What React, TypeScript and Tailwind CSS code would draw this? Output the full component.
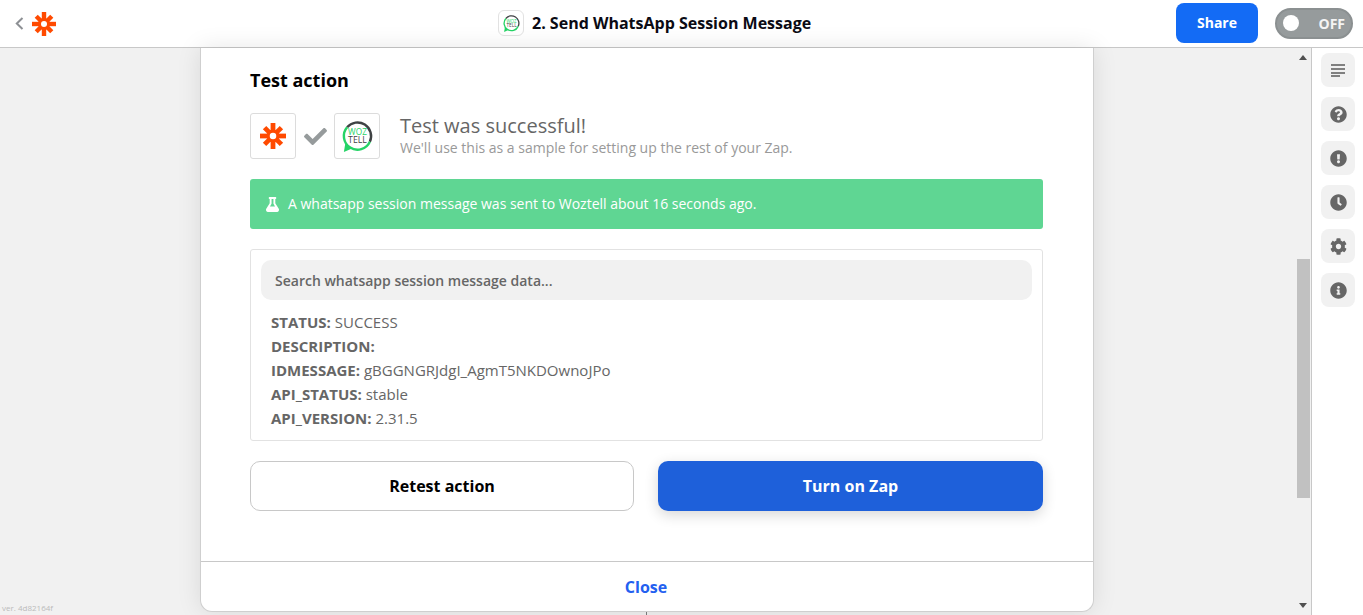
import { FaCheck, FaClock, FaCog, FaExclamationCircle, FaFlask, FaInfoCircle, FaQuestionCircle } from "react-icons/fa";

const ZapierMark = ({ size }: { size: number }) => (
  <svg width={size} height={size} viewBox="0 0 24 24">
    <g fill="#ff4a00">
      <rect x="9.8" y="0" width="4.4" height="24" />
      <rect x="0" y="9.8" width="24" height="4.4" />
      <rect x="9.8" y="1" width="4.4" height="22" transform="rotate(45 12 12)" />
      <rect x="9.8" y="1" width="4.4" height="22" transform="rotate(-45 12 12)" />
      <circle cx="12" cy="12" r="6" />
    </g>
    <circle cx="12" cy="12" r="3" fill="#fff" />
  </svg>
);

const WoztellMark = ({ size }: { size: number }) => (
  <svg width={size} height={size} viewBox="0 0 36 36">
    <path d="M7.3 8.5 A14 14 0 0 1 30.7 23.4" fill="none" stroke="#3f4244" strokeWidth="2.5" />
    <path d="M30.7 23.4 A14 14 0 1 1 7.3 8.5" fill="none" stroke="#25d366" strokeWidth="2.5" />
    <path d="M5.5 25 L4 34 L13 30 Z" fill="#25d366" />
    <text x="18" y="16.5" textAnchor="middle" fontSize="8.5" fill="#25d366" fontFamily="'Open Sans', sans-serif">
      WOZ
    </text>
    <text x="18" y="25" textAnchor="middle" fontSize="9" fill="#3f4244" fontFamily="'Open Sans', sans-serif">
      TELL
    </text>
  </svg>
);

const rows = [
  ["STATUS:", "SUCCESS"],
  ["DESCRIPTION:", ""],
  ["IDMESSAGE:", "gBGGNGRJdgI_AgmT5NKDOwnoJPo"],
  ["API_STATUS:", "stable"],
  ["API_VERSION:", "2.31.5"],
];

const sideButtons = [
  <svg key="lines" width="15" height="13" viewBox="0 0 15 13" fill="#808080">
    <rect y="0" width="14" height="2" />
    <rect y="4" width="14" height="2" />
    <rect y="8" width="14" height="2" />
    <rect y="11" width="9" height="2" />
  </svg>,
  <FaQuestionCircle key="help" size={17} />,
  <FaExclamationCircle key="alert" size={17} />,
  <FaClock key="clock" size={17} />,
  <FaCog key="cog" size={17} />,
  <FaInfoCircle key="info" size={17} />,
];

export default function App() {
  return (
    <div className="h-[615px] w-[1363px] overflow-hidden flex flex-col bg-white font-['Open_Sans',sans-serif]">
      {/* Top bar */}
      <header className="h-12 shrink-0 flex items-center justify-between border-b border-[#c8c8c8] bg-white pl-[15px] pr-[10px] relative">
        <div className="flex items-center gap-[8px]">
          <svg width="9" height="13" viewBox="0 0 9 13" fill="none" stroke="#8d9094" strokeWidth="2">
            <path d="M7.5 1 L1.8 6.5 L7.5 12" />
          </svg>
          <ZapierMark size={24} />
        </div>

        <div className="absolute left-[498px] top-[10px] flex items-center gap-[8px]">
          <div className="w-[26px] h-[26px] rounded-md border border-[#e2e2e2] flex items-center justify-center">
            <WoztellMark size={19} />
          </div>
          <span className="text-[16px] leading-6 font-bold text-[#0b0b14]">2. Send WhatsApp Session Message</span>
        </div>

        <div className="flex items-center gap-[17px] mb-px">
          <button className="w-[82px] h-10 rounded-lg bg-[#136bf5] text-white text-[14px] font-bold pb-px">Share</button>
          <div className="w-[78px] h-[31px] rounded-full bg-[#969b9c] border-2 border-[#8b9091] flex items-center justify-between pl-[6px] pr-[6px]">
            <span className="w-4 h-4 rounded-full bg-white" />
            <span className="text-[14px] font-bold text-[#f4f4f4]">OFF</span>
          </div>
        </div>
      </header>

      <div className="flex-1 min-h-0 flex">
        {/* Canvas with the editor panel */}
        <div className="relative flex-1 min-w-0 flex justify-center bg-[#f1f1f1] pr-[1px]">
          <div className="flex flex-col">
            <section className="w-[894px] h-[564px] shrink-0 flex flex-col bg-white rounded-b-xl border-x border-b border-[#cfcfcf] shadow-[0_0_24px_rgba(0,0,0,0.1)]">
              <div className="flex-1 px-[49px]">
                <h2 className="mt-[20px] text-[18px] leading-6 font-bold text-black">Test action</h2>

                <div className="mt-[21px] flex items-center h-[46px]">
                  <div className="w-[46px] h-[46px] rounded-[3px] border border-[#dcdcdc] flex items-center justify-center">
                    <ZapierMark size={26} />
                  </div>
                  <FaCheck size={23} className="ml-[8px] mr-[7px] text-[#969b9c]" />
                  <div className="w-[46px] h-[46px] rounded-[3px] border border-[#dcdcdc] flex items-center justify-center">
                    <WoztellMark size={35} />
                  </div>
                  <div className="ml-[20px] -mt-[2px]">
                    <p className="text-[20px] leading-[26px] text-[#666]">Test was successful!</p>
                    <p className="text-[14px] leading-[18px] text-[#999]">We'll use this as a sample for setting up the rest of your Zap.</p>
                  </div>
                </div>

                <div className="mt-5 w-[793px] h-[50px] rounded-[3px] bg-[#5fd693] flex items-center gap-[8px] pl-[15px] text-white">
                  <FaFlask size={15} />
                  <span className="text-[14px] font-medium -mt-[2px]">A whatsapp session message was sent to Woztell about 16 seconds ago.</span>
                </div>

                <div className="mt-5 w-[793px] h-[192px] rounded-[3px] border border-[#e2e2e2] p-[10px]">
                  <div className="h-10 rounded-[10px] bg-[#f1f1f1] flex items-center px-[14px] text-[14px] font-semibold text-[#666]">
                    Search whatsapp session message data...
                  </div>
                  <div className="mt-[10px] pl-[10px] text-[15px] leading-6 text-[#666]">
                    {rows.map(([key, value]) => (
                      <div key={key}>
                        <span className="font-bold">{key}</span> {value}
                      </div>
                    ))}
                  </div>
                </div>

                <div className="mt-5 flex gap-6">
                  <button className="w-[384px] h-[50px] rounded-[10px] border border-[#c8c8c8] bg-white text-[16px] font-bold text-black">
                    Retest action
                  </button>
                  <button className="w-[385px] h-[50px] rounded-[10px] bg-[#1e60da] text-[16px] font-bold text-white shadow-[0_4px_14px_rgba(0,0,0,0.16)]">
                    Turn on Zap
                  </button>
                </div>
              </div>

              <div className="h-[50px] shrink-0 border-t border-[#c8c8c8] flex items-center justify-center pr-[2px] text-[16px] font-bold text-[#2360f0]">
                Close
              </div>
            </section>
            <div className="ml-[446px] w-px h-1 bg-[#777]" />
          </div>

          <span className="absolute left-[2px] bottom-[2px] text-[8px] leading-[11px] text-[#bbb]">ver. 4d82164f</span>
        </div>

        {/* Scrollbar */}
        <div className="w-4 shrink-0 bg-[#f1f1f1] flex flex-col items-center">
          <div className="mt-[7px] w-0 h-0 border-x-4 border-x-transparent border-b-[5px] border-b-[#505050]" />
          <div className="mt-[199px] w-[13px] h-[239px] bg-[#c1c1c1]" />
          <div className="mt-[105px] w-0 h-0 border-x-4 border-x-transparent border-t-[5px] border-t-[#505050]" />
        </div>

        {/* Right tool rail */}
        <aside className="w-[52px] shrink-0 border-l border-[#c8c8c8] bg-white flex flex-col gap-[10px] pt-[5px] pl-[9px]">
          {sideButtons.map((icon, i) => (
            <div key={i} className="w-[34px] h-[34px] rounded-lg bg-[#f1f1f1] flex items-center justify-center text-[#666]">
              {icon}
            </div>
          ))}
        </aside>
      </div>
    </div>
  );
}
